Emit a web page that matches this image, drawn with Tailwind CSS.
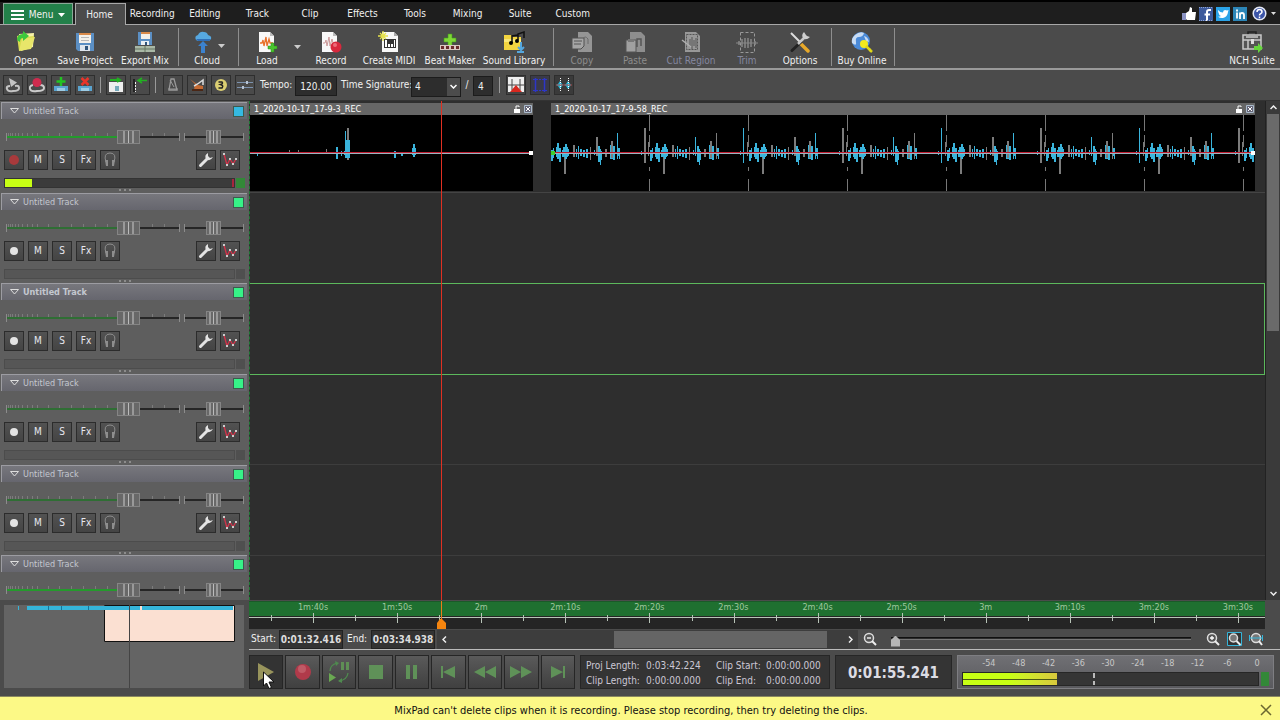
<!DOCTYPE html>
<html lang="en">

<head>
    <meta charset="UTF-8">
    <meta name="viewport" content="width=device-width, initial-scale=1.0">
    <title>MixPad</title>
    <script src="https://cdn.jsdelivr.net/npm/@tailwindcss/browser@4"></script>
</head>

<body class="h-screen flex flex-col overflow-hidden bg-[#4b4b4b] text-[#f0f0f0] text-[10px] leading-[12px] font-['DejaVu_Sans_Condensed','DejaVu_Sans',sans-serif] whitespace-nowrap">

    <!-- tab bar -->
    <header class="h-[25px] shrink-0 flex items-end bg-[#1e1e1e] border-t-2 border-black border-b border-b-[#a8a8a8] pl-[3px]">
        <button class="w-[70px] h-[21px] pt-px bg-[#23804a] border border-[#8aa897] border-b-0 flex items-center justify-center gap-[5px]">
            <svg width="13" height="10" viewBox="0 0 13 10"><path d="M0 1h13M0 5h13M0 9h13" stroke="#fff" stroke-width="2"/></svg>
            Menu
            <svg width="7" height="4" viewBox="0 0 7 4"><path d="M0 0h7L3.500 4z" fill="#fff"/></svg>
        </button>
        <nav class="flex items-end">
            <a href="#" class="ml-[2px] w-[51px] h-[22px] -mb-px pr-[2px] bg-[#4b4b4b] border border-[#a8a8a8] border-b-0 flex items-center justify-center">Home</a>
            <div class="w-[473px] h-[20px] grid grid-cols-9 items-center text-center">
                <a href="#">Recording</a>
                <a href="#">Editing</a>
                <a href="#">Track</a>
                <a href="#">Clip</a>
                <a href="#">Effects</a>
                <a href="#">Tools</a>
                <a href="#">Mixing</a>
                <a href="#">Suite</a>
                <a href="#">Custom</a>
            </div>
        </nav>
        <div class="ml-auto flex items-center gap-[3px] pr-[4px] pb-[3px]">
            <button aria-label="Like"><svg width="14" height="14" viewBox="0 0 14 14"><path d="M0 6h4v7H0z" fill="#8b93c4"/><path d="M4 6l3-2 1-4 2 1v4h4l-1 8H5l-1-1z" fill="#fff"/></svg></button>
            <button aria-label="Facebook"><svg width="14" height="14" viewBox="0 0 14 14"><path d="M0 0h14v14H0z" fill="#3d5a9c"/><path d="M12 3h-2q-2 0-2 2v9M5.500 7.500H11" stroke="#fff" stroke-width="2" fill="none"/><path d="M0 .5h14M0 13.500h14" stroke="#8fa3cf" stroke-dasharray="1 1"/></svg></button>
            <button aria-label="Twitter"><svg width="14" height="14" viewBox="0 0 14 14"><path d="M0 0h14v14H0z" fill="#2aa3e8"/><path d="M2 3q2 2.500 5 2.500Q7 3 9 3l2 .5L12.500 3 12 5q-.5 5-5 6-3 .3-5-1.200 2 0 3-.8-2-.5-2-2Q2 5 2 3z" fill="#fff"/></svg></button>
            <button aria-label="LinkedIn"><svg width="14" height="14" viewBox="0 0 14 14"><path d="M0 0h14v14H0z" fill="#2c86b8"/><path d="M4 5.500v6M4 2.500v2M7 12V5.500M7 8q0-2 2-2t2 2v4" stroke="#fff" stroke-width="1.800" fill="none"/></svg></button>
            <button aria-label="Help" class="ml-[2px]"><svg width="15" height="15" viewBox="0 0 15 15"><circle cx="7.500" cy="7.500" r="6.300" fill="#3c55a8" stroke="#e4e8f4" stroke-width="1.500"/><path d="M5 6q0-2.500 2.500-2.500T10 6q0 1-1.300 1.700T7.500 9.500M7.500 10.500v1.700" stroke="#fff" stroke-width="1.500" fill="none"/></svg></button>
            <button aria-label="Help options" class="ml-px"><svg width="5" height="3" viewBox="0 0 5 3"><path d="M0 0h5L2.500 3z" fill="#ddd"/></svg></button>
        </div>
    </header>

    <!-- ribbon -->
    <section class="h-[45px] shrink-0 flex items-center border-b-2 border-[#9a9a9a]">
        <button class="w-[52px] pt-[5px] flex flex-col items-center gap-[2px]">
            <svg width="22" height="22" viewBox="0 0 22 22"><path d="M4 3l15-1-1 14-12 4z" fill="#f7f2a8"/><path d="M2 5l7-2 1 3 9-1-3 12-12 3z" fill="#d9dc4e"/><path d="M7 8l13-2-4 12-12 2z" fill="#e8e66a"/><path d="M2 9q0-6 6-6V0l6 5-6 5V7Q5 7 5 11z" fill="#3cc83c"/></svg>
            Open</button>
        <button class="w-[66px] pt-[5px] flex flex-col items-center gap-[2px]">
            <svg width="22" height="22" viewBox="0 0 22 22"><path d="M2 2h18v18H4l-2-2z" fill="#5b8fc4"/><path d="M5 2h12v10H5z" fill="#f4f0ea"/><path d="M5 2h12v2H5z" fill="#d98a4a"/><path d="M7 6.500h8M7 9.500h8" stroke="#b8b8b8"/><path d="M6 14h10v6H6z" fill="#dfe6ee"/><path d="M11 15h3v4h-3z" fill="#31567c"/></svg>
            Save Project</button>
        <button class="w-[54px] pt-[5px] flex flex-col items-center gap-[2px]">
            <svg width="22" height="22" viewBox="0 0 22 22"><path d="M4 1h14v13H4z" fill="#5b8fc4"/><path d="M7 1h9v7H7z" fill="#f4f0ea"/><path d="M7 1h9v2H7z" fill="#d98a4a"/><path d="M7 10h8v4H7z" fill="#e8eef4"/><path d="M11 11h2v3h-2z" fill="#31567c"/><path d="M1 15h20v6H1z" fill="#a9b8a6"/><path d="M1 18h20M11 15v6" stroke="#657562"/></svg>
            Export Mix</button>
        <span class="w-px h-[38px] mx-[6px] bg-[#8e8e8e]"></span>
        <button class="w-[44px] pt-[5px] flex flex-col items-center gap-[2px]">
            <span class="flex items-center gap-[6px] pl-[5px]">
                <svg width="18" height="22" viewBox="0 0 18 22"><path d="M2 9Q0 5 4 4q2-4 6-3 3 0 4 3 4 1 3 4l-2 2H4z" fill="#56a8e0"/><path d="M2 8h15l-2 2H4z" fill="#2f6fb8"/><path d="M9 10l5 5h-3v7H7v-7H4z" fill="#3b82cf"/></svg>
                <svg class="mt-[8px]" width="7" height="4" viewBox="0 0 7 4"><path d="M0 0h7L3.500 4z" fill="#ccc"/></svg>
            </span>
            Cloud</button>
        <span class="w-px h-[38px] mx-[9px] bg-[#8e8e8e]"></span>
        <button class="w-[38px] pt-[5px] flex flex-col items-center gap-[2px]">
            <svg width="22" height="22" viewBox="0 0 22 22"><path d="M3 1h11l4 4v16H3z" fill="#f8f8f8"/><path d="M14 1v4h4z" fill="#bbb"/><path d="M4 12h2l1-3 1 6 2-9 1 9 2-7 1 4h3" stroke="#e8702a" stroke-width="1.300" fill="none"/><path d="M15 12h3v3h3v3h-3v3h-3v-3h-3v-3h3z" fill="#4ac52e" stroke="#2d8c1b" stroke-width=".5"/></svg>
            Load</button>
        <button aria-label="Load options" class="w-[21px] pl-[2px] flex justify-center"><svg width="7" height="4" viewBox="0 0 7 4"><path d="M0 0h7L3.500 4z" fill="#ccc"/></svg></button>
        <button class="w-[48px] pt-[5px] flex flex-col items-center gap-[2px]">
            <svg width="22" height="22" viewBox="0 0 22 22"><path d="M2 1h11l4 4v16H2z" fill="#f8f8f8"/><path d="M13 1v4h4z" fill="#bbb"/><path d="M3 12h2l1-3 1 6 2-9 1 9 2-7 1 4h3" stroke="#c99" stroke-width="1" fill="none"/><circle cx="16" cy="16" r="5.500" fill="#d8283c"/><circle cx="15" cy="14" r="2" fill="#ee6b78"/></svg>
            Record</button>
        <button class="w-[68px] pt-[5px] flex flex-col items-center gap-[2px]">
            <svg width="22" height="22" viewBox="0 0 22 22"><path d="M4 1h12l4 4v16H4z" fill="#f8f8f8"/><path d="M16 1v4h4z" fill="#aaa"/><path d="M6 8h12v9H6z" fill="#333"/><path d="M7 9h2v7H7zM10 13h2v3h-2zM13 13h2v3h-2zM16 9h1v7h-1z" fill="#fff"/><path d="M5 0v10M0 5h10M2 2l6 6M8 2l-6 6" stroke="#e6e24c" stroke-width="1.300"/></svg>
            Create MIDI</button>
        <button class="w-[54px] pt-[5px] flex flex-col items-center gap-[2px]">
            <svg width="22" height="22" viewBox="0 0 22 22"><path d="M9 3h4v4h4v4h-4v4H9v-4H5V7h4z" fill="#7fd836" stroke="#3f9a1c" stroke-width=".6"/><path d="M1 14h20v5H1z" fill="#d9c8c0"/><path d="M2 15h3v3H2zM7 15h3v3H7zM12 15h3v3h-3zM17 15h3v3h-3z" fill="#6a2c2c"/></svg>
            Beat Maker</button>
        <button class="w-[74px] pt-[5px] flex flex-col items-center gap-[2px]">
            <svg width="22" height="22" viewBox="0 0 22 22"><path d="M1 4h7l2 2h8v13H1z" fill="#f3d540"/><path d="M1 8h17v3H1z" fill="#fae878"/><path d="M9 12V5l6-1M15 9V3l6-2v6" stroke="#111" stroke-width="1.500" fill="none"/><circle cx="8" cy="12" r="2"/><circle cx="14" cy="10" r="2"/><path d="M18 11v8M15 16l3 3 3-3M14 21h7" stroke="#55a7de" stroke-width="2" fill="none"/></svg>
            Sound Library</button>
        <span class="w-px h-[38px] mx-[2px] bg-[#8e8e8e]"></span>
        <button disabled class="w-[52px] pt-[5px] flex flex-col items-center gap-[2px] text-[#8d8d8d]">
            <svg width="22" height="22" viewBox="0 0 22 22"><path d="M7 1h10l4 4v16H7z" fill="#959595"/><path d="M12 8q2-4 5 0v5" stroke="#6a6a6a" fill="none"/><path d="M1 7h12v8l-3 3H1z" fill="#a5a5a5" stroke="#505050"/><path d="M3 10h8M3 13h7" stroke="#555"/></svg>
            Copy</button>
        <button disabled class="w-[54px] pt-[5px] flex flex-col items-center gap-[2px] text-[#8d8d8d]">
            <svg width="22" height="22" viewBox="0 0 22 22"><path d="M6 1h11l4 4v16H6z" fill="#8e8e8e"/><path d="M13 16V8h4v7" stroke="#555" fill="none" stroke-width="1.500"/><path d="M2 9h10v12H2z" fill="#a0a0a0" stroke="#555"/><path d="M4 8h6v3H4z" fill="#777"/></svg>
            Paste</button>
        <button disabled class="w-[58px] pt-[5px] flex flex-col items-center gap-[2px] text-[#8588a0]">
            <svg width="22" height="22" viewBox="0 0 22 22"><path d="M5 1h11l4 4v16H5z" fill="#989898"/><path d="M6.500 3.500h11v15h-11z" fill="none" stroke="#555" stroke-dasharray="2 1"/><path d="M10 8v8M12 6v12M14 9v6M16 7v10" stroke="#555"/><path d="M2 9l9 7" stroke="#b0b0b0" stroke-width="1.500"/></svg>
            Cut Region</button>
        <button disabled class="w-[54px] pt-[5px] flex flex-col items-center gap-[2px] text-[#8588a0]">
            <svg width="22" height="22" viewBox="0 0 22 22"><path d="M4.500 1.500h14v20h-14z" fill="none" stroke="#999" stroke-dasharray="3 2"/><path d="M0 12h22" stroke="#888"/><path d="M3 10v4M6 8v8M9 7v10M12 7v10M15 8v8M19 10v4" stroke="#888" stroke-width="1.500"/></svg>
            Trim</button>
        <button class="w-[52px] pt-[5px] flex flex-col items-center gap-[2px]">
            <svg width="22" height="22" viewBox="0 0 22 22"><path d="M2 2l9 9" stroke="#ddd" stroke-width="2"/><path d="M11 12l8 8" stroke="#e8a92a" stroke-width="3.500" stroke-linecap="round"/><path d="M3 19.500L12 11" stroke="#222" stroke-width="3" stroke-linecap="round"/><path d="M9 13l7-7" stroke="#c8c8c8" stroke-width="2.500"/><path d="M15 1q-3 3-1 6 3 3 7-1l-3-1-1-1z" fill="#cfcfcf"/></svg>
            Options</button>
        <span class="w-px h-[38px] ml-[5px] mr-[2px] bg-[#8e8e8e]"></span>
        <button class="w-[56px] pt-[5px] flex flex-col items-center gap-[2px]">
            <svg width="22" height="22" viewBox="0 0 22 22"><circle cx="10" cy="10" r="9" fill="#4a8ad8"/><path d="M4 4q5-4 9-2-1 4-5 4t-3 5-4 1q-1-5 3-8zM13 5q4 1 5 6l-3-1z" fill="#c8dcf4"/><circle cx="13" cy="13" r="4" fill="#f2ea1e"/><path d="M15 15l6 6M18 20l2-2" stroke="#e0d818" stroke-width="2.500"/></svg>
            Buy Online</button>
        <span class="w-px h-[38px] ml-[4px] bg-[#8e8e8e]"></span>
        <button class="ml-auto w-[56px] pt-[5px] flex flex-col items-center gap-[2px]">
            <svg width="22" height="22" viewBox="0 0 22 22"><path d="M7 4V1h8v3" stroke="#222" stroke-width="1.500" fill="none"/><path d="M2 4h18v14H2z" fill="#555" stroke="#c9c9c9" stroke-width="1.500"/><path d="M2 9h18M7 9v9M5 6h12" stroke="#c9c9c9" stroke-width="1.500"/><path d="M10 8h3v5h-3z" fill="#ddd"/><path d="M13 15h4v-3l5 5-5 5v-3h-4z" fill="#66d63c"/></svg>
            NCH Suite</button>
    </section>

    <!-- toolbar -->
    <section class="h-[31px] shrink-0 flex items-center pl-[3px] border-b border-[#333]">
        <div class="flex gap-[4px]">
            <button aria-label="Loop playback" class="size-5 border border-[#2e2e2e] bg-[#4a4a4a] grid place-items-center"><svg width="16" height="16" viewBox="0 0 16 16"><path d="M5 9q-4 0-3 3t6 2q6 0 6-3t-4-2" stroke="#c4c4c4" stroke-width="2" fill="none"/><path d="M4 1l8 4.500L6 10z" fill="#c4c4c4"/></svg></button>
            <button aria-label="Loop recording" class="size-5 border border-[#2e2e2e] bg-[#4a4a4a] grid place-items-center"><svg width="16" height="16" viewBox="0 0 16 16"><path d="M4 8q-4 1-3 4t7 2q7 0 7-3t-4-3" stroke="#ccc" stroke-width="2" fill="none"/><circle cx="8" cy="5.500" r="4.500" fill="#cf2b4e"/></svg></button>
            <button aria-label="Add track" class="size-5 border border-[#2e2e2e] bg-[#4a4a4a] grid place-items-center"><svg width="16" height="16" viewBox="0 0 16 16"><path d="M1 9h14v5H1z" fill="#5aa4d0"/><path d="M4 11h8v3H4z" fill="#9ccbe4"/><path d="M8 0v9M3.500 4.500h9" stroke="#22c422" stroke-width="2.500"/></svg></button>
            <button aria-label="Delete track" class="size-5 border border-[#2e2e2e] bg-[#4a4a4a] grid place-items-center"><svg width="16" height="16" viewBox="0 0 16 16"><path d="M1 9h14v5H1z" fill="#5aa4d0"/><path d="M4 11h8v3H4z" fill="#9ccbe4"/><path d="M4.500 1l7 7M11.500 1l-7 7" stroke="#e8342a" stroke-width="2.500"/></svg></button>
        </div>
        <span class="w-px h-4 mx-[5px] bg-[#999]"></span>
        <div class="flex gap-[4px]">
            <button aria-label="Insert mode" class="size-5 border border-[#2e2e2e] bg-[#4a4a4a] grid place-items-center"><svg width="16" height="16" viewBox="0 0 16 16"><path d="M1 5h14v10H1z" fill="#eee"/><path d="M7 9h4v5H7z" fill="#7ab"/><path d="M2 3h9M9 1l3 2-3 2" stroke="#22b022" stroke-width="2" fill="none"/></svg></button>
            <button aria-label="Ripple mode" class="size-5 border border-[#2e2e2e] bg-[#4a4a4a] grid place-items-center"><svg width="16" height="16" viewBox="0 0 16 16"><path d="M1 2h2v13H1z" fill="#222"/><path d="M3.500 5v10" stroke="#eee" stroke-dasharray="2 1"/><path d="M15 3.500H7M10 1L6 3.500 10 6" stroke="#22b022" stroke-width="1.500" fill="none"/></svg></button>
        </div>
        <span class="w-px h-4 ml-[5px] mr-[7px] bg-[#999]"></span>
        <div class="flex gap-[4px]">
            <button aria-label="Metronome" class="size-5 border border-[#2e2e2e] bg-[#4a4a4a] grid place-items-center"><svg width="16" height="16" viewBox="0 0 16 16"><path d="M6 2h3l3 11H4z" fill="none" stroke="#9a9a9a" stroke-width="1.300"/><path d="M3 12h10M9 10L5 3" stroke="#9a9a9a"/></svg></button>
            <button aria-label="Metronome options" class="size-5 border border-[#2e2e2e] bg-[#4a4a4a] grid place-items-center"><svg width="16" height="16" viewBox="0 0 16 16"><path d="M1 2l5 5-1 6h9v-4l-5-1z" fill="#c66a32"/><path d="M5 9q4-2 9-6v5" stroke="#ddd" stroke-width="1.500" fill="none"/><path d="M3 12h11v2H3z" fill="#4a2716"/></svg></button>
            <button aria-label="Count in" class="size-5 border border-[#2e2e2e] bg-[#4a4a4a] grid place-items-center"><svg width="16" height="16" viewBox="0 0 16 16"><circle cx="8" cy="8" r="6" fill="#dccf72"/><path d="M5.500 5H9q1.500 1.500-1.500 2.500Q11 8.500 9 11H5.500" stroke="#222" stroke-width="1.500" fill="none"/></svg></button>
            <button aria-label="Snap" class="size-5 border border-[#2e2e2e] bg-[#4a4a4a] grid place-items-center"><svg width="16" height="16" viewBox="0 0 16 16"><path d="M0 5.500h16M0 10.500h16" stroke="#7c92ae"/><path d="M10 4v3M6 9v3" stroke="#b8c4d4" stroke-width="2"/></svg></button>
        </div>
        <label for="tempo" class="ml-[5px] w-[35px]">Tempo:</label>
        <input id="tempo" type="text" value="120.00" class="w-[42px] h-5 mt-[2px] bg-[#2d2d2d] border border-[#1c1c1c] text-center">
        <label for="beats" class="ml-[4px] w-[70px]">Time Signature:</label>
        <div class="relative mt-[3px]">
            <select id="beats" class="appearance-none w-[50px] h-5 pl-[3px] bg-[#2d2d2d] border border-[#1c1c1c]"><option>4</option></select>
            <span class="absolute right-px top-px w-[13px] h-[18px] bg-[#4c4c4c] grid place-items-center pointer-events-none"><svg width="7" height="5" viewBox="0 0 7 5"><path d="M.5 1l3 3 3-3" stroke="#fff" stroke-width="1.500" fill="none"/></svg></span>
        </div>
        <label for="unit" class="w-[12px] text-center">/</label>
        <input id="unit" type="text" value="4" class="w-[20px] h-5 mt-[2px] bg-[#2d2d2d] border border-[#1c1c1c] pl-[4px]">
        <span class="w-px h-4 mx-[6px] bg-[#999]"></span>
        <div class="flex gap-[4px]">
            <button aria-label="Split" class="size-5 border border-[#2e2e2e] bg-[#444] grid place-items-center"><svg width="16" height="16" viewBox="0 0 16 16"><path d="M0 0h16v15H0z" fill="#eee"/><path d="M4 2v11M12 2v11M0 8h16" stroke="#444"/><path d="M8 8l6 7H2z" fill="#d8281f"/></svg></button>
            <button aria-label="Select region" class="size-5 border border-[#2e2e2e] bg-[#3a3a48] grid place-items-center"><svg width="16" height="16" viewBox="0 0 16 16"><path d="M3.500 1v14M12.500 1v14" stroke="#2d36c8" stroke-width="1.500"/><path d="M1 2.500h14M1 13.500h14" stroke="#2d36c8" stroke-dasharray="2 1"/></svg></button>
            <button aria-label="Waveforms" class="size-5 border border-[#2e2e2e] bg-[#3a3a3a] grid place-items-center"><svg width="16" height="16" viewBox="0 0 16 16"><path d="M0 8l2-1 2-3 3 4-3 4-2-3zM8 8l2-1 2-3 3 4-3 4-2-3z" fill="#25b8d8"/><path d="M4.500 1v14M12.500 1v14" stroke="#fff" stroke-dasharray="1 1"/><path d="M0 8h16" stroke="#a44"/></svg></button>
        </div>
    </section>

    <main class="flex-1 min-h-0 flex flex-col">
        <div class="flex-1 min-h-0 flex">
            <aside id="tracks" class="w-[249px] shrink-0 overflow-hidden bg-[#5e5e5e] pt-px"></aside>

            <!-- arrangement -->
            <section class="relative flex-1 min-w-0 overflow-hidden bg-[#2e2e2e] border-l border-dashed border-[#1c7a32]">
                <div class="h-[92px] flex pt-[2px] border-b border-[#444]">
                    <article class="w-[283px] h-[88px] shrink-0 bg-black">
                        <div class="h-[12px] flex items-center pl-[4px] pr-px bg-[#666] text-white text-[9px]">1_2020-10-17_17-9-3_REC
                            <span class="ml-auto flex gap-[3px]"><svg width="8" height="8" viewBox="0 0 8 8"><path d="M1 4h6v4H1z" fill="#fff"/><path d="M3 4V1h3v1" stroke="#fff" fill="none"/></svg><svg width="8" height="8" viewBox="0 0 8 8"><path d="M.5.5h7v7h-7z" fill="#667" stroke="#abc"/><path d="M2 2l4 4M6 2L2 6" stroke="#fff"/></svg></span>
                        </div>
                        <svg id="wave1" width="283" height="76" viewBox="0 0 283 76"></svg>
                    </article>
                    <article class="ml-[18px] w-[704px] h-[88px] shrink-0 bg-black">
                        <div class="h-[12px] flex items-center pl-[4px] pr-px bg-[#666] text-white text-[9px]">1_2020-10-17_17-9-58_REC
                            <span class="ml-auto flex gap-[3px]"><svg width="8" height="8" viewBox="0 0 8 8"><path d="M1 4h6v4H1z" fill="#fff"/><path d="M3 4V1h3v1" stroke="#fff" fill="none"/></svg><svg width="8" height="8" viewBox="0 0 8 8"><path d="M.5.5h7v7h-7z" fill="#667" stroke="#abc"/><path d="M2 2l4 4M6 2L2 6" stroke="#fff"/></svg></span>
                        </div>
                        <svg id="wave2" width="704" height="76" viewBox="0 0 704 76"></svg>
                    </article>
                </div>
                <div class="h-[90px]"></div>
                <div class="h-[92px] -ml-px border border-[#5cb85c]"></div>
                <div class="h-[90px] border-b border-[#3d3d3d]"></div>
                <div class="h-[91px] border-b border-[#3d3d3d]"></div>
                <div class="absolute left-[191px] top-0 bottom-0 w-px bg-[#e03022]"></div>
            </section>

            <!-- vertical scroll bar -->
            <div class="w-[15px] shrink-0 bg-[#3a3a3a] border-l border-[#222] flex flex-col items-center">
                <button aria-label="Scroll up" class="h-[13px]"><svg width="7" height="5" viewBox="0 0 7 5"><path d="M.5 4l3-3 3 3" stroke="#eee" stroke-width="1.500" fill="none"/></svg></button>
                <div class="w-[12px] h-[217px] bg-[#6a6a6a]"></div>
                <button aria-label="Scroll down" class="mt-auto h-[13px]"><svg width="7" height="5" viewBox="0 0 7 5"><path d="M.5 1l3 3 3-3" stroke="#eee" stroke-width="1.500" fill="none"/></svg></button>
            </div>
        </div>

        <div class="h-[96px] shrink-0 flex">
            <!-- project overview -->
            <div class="w-[249px] shrink-0 pl-[4px] pt-[5px]">
                <svg width="240" height="83" viewBox="0 0 240 83"><path d="M0 0h240v83H0z" fill="#646464"/><path d="M100.500.5h130v36h-130z" fill="#fbe0d2" stroke="#111"/><path d="M14 1h1v4h-1zM23 1h113v4H23zM138 1h91v4h-91z" fill="#35b5da"/><path d="M44.500 1v4M57.500 1v4M84.500 1v4" stroke="#17759a"/><path d="M125.500 0v83" stroke="#444"/></svg>
            </div>

            <div class="flex-1 min-w-0 flex flex-col">
                <!-- time ruler -->
                <div class="relative h-[28px] mr-[15px] mt-px overflow-hidden bg-[#252525]">
                    <div class="h-[15px] bg-[#1f7030] border-t border-[#1a5a28]"></div>
                    <svg id="ruler" class="absolute left-0 top-0" width="1016" height="28" viewBox="0 0 1016 28"></svg>
                    <div class="absolute left-[22px] top-px w-[1009px] grid grid-cols-12 text-center text-[9px] leading-[10px] text-[#9fc79f]">
                        <span>1m:40s</span><span>1m:50s</span><span>2m</span><span>2m:10s</span><span>2m:20s</span><span>2m:30s</span><span>2m:40s</span><span>2m:50s</span><span>3m</span><span>3m:10s</span><span>3m:20s</span><span>3m:30s</span>
                    </div>
                </div>

                <!-- visible range and zoom -->
                <div class="h-[21px] flex items-center border-b border-[#bbb] pl-[2px]">
                    <span class="w-[28px]">Start:</span>
                    <span class="w-[64px] h-[19px] pt-px grid place-items-center bg-[#333] border border-[#222] font-bold text-[#ddd]">0:01:32.416</span>
                    <span class="ml-[4px] w-[24px]">End:</span>
                    <span class="w-[64px] h-[19px] pt-px grid place-items-center bg-[#333] border border-[#222] font-bold text-[#ddd]">0:03:34.938</span>
                    <div class="ml-[2px] w-[421px] h-[19px] flex items-center bg-[#3d3d3d] px-[5px]">
                        <button aria-label="Scroll left"><svg width="5" height="7" viewBox="0 0 5 7"><path d="M4 .5l-3 3 3 3" stroke="#eee" stroke-width="1.500" fill="none"/></svg></button>
                        <div class="ml-[167px] w-[213px] h-[17px] bg-[#656565]"></div>
                        <button aria-label="Scroll right" class="ml-auto"><svg width="5" height="7" viewBox="0 0 5 7"><path d="M1 .5l3 3-3 3" stroke="#eee" stroke-width="1.500" fill="none"/></svg></button>
                    </div>
                    <button aria-label="Zoom out" class="ml-[5px]"><svg width="14" height="14" viewBox="0 0 14 14"><circle cx="6" cy="6" r="4.500" fill="#555" stroke="#ddd" stroke-width="1.500"/><path d="M9 9l4 4" stroke="#eee" stroke-width="2"/><path d="M4 6h4" stroke="#fff" stroke-width="1.300"/></svg></button>
                    <div class="relative flex-1 ml-[14px] mr-[15px] h-[14px]">
                        <span class="absolute inset-x-0 top-[5px] h-[3px] border-y border-t-[#111] border-b-[#777] bg-[#2b2b2b]"></span>
                        <input aria-label="Zoom" type="range" min="0" max="100" value="0" class="appearance-none absolute inset-0 w-full h-[14px] bg-transparent [&::-webkit-slider-thumb]:appearance-none [&::-webkit-slider-thumb]:w-[9px] [&::-webkit-slider-thumb]:h-[11px] [&::-webkit-slider-thumb]:mt-[4px] [&::-webkit-slider-thumb]:bg-[#b5b5b5] [&::-webkit-slider-thumb]:[clip-path:polygon(50%_0,100%_40%,100%_100%,0_100%,0_40%)]">
                    </div>
                    <div class="flex gap-[7px] pr-[17px]">
                        <button aria-label="Zoom in"><svg width="14" height="14" viewBox="0 0 14 14"><circle cx="6" cy="6" r="4.500" fill="#555" stroke="#ddd" stroke-width="1.500"/><path d="M9 9l4 4" stroke="#eee" stroke-width="2"/><path d="M4 6h4M6 4v4" stroke="#fff" stroke-width="1.300"/></svg></button>
                        <button aria-label="Zoom selection"><svg width="15" height="14" viewBox="0 0 15 14"><path d="M.5.5h14v13H.5z" fill="#333" stroke="#35b5da"/><circle cx="6.500" cy="6" r="4" fill="#777" stroke="#ddd" stroke-width="1.500"/><path d="M9.500 9l4 4" stroke="#eee" stroke-width="2"/></svg></button>
                        <button aria-label="Zoom to fit"><svg width="14" height="14" viewBox="0 0 14 14"><circle cx="7" cy="6" r="4.500" fill="#777" stroke="#ddd" stroke-width="1.500"/><path d="M10 9l3 4" stroke="#eee" stroke-width="2"/><path d="M0 6h14M.5 3v6M13.500 3v6" stroke="#35b5da"/></svg></button>
                    </div>
                </div>

                <!-- transport -->
                <div class="flex-1 flex items-center pb-[2px] gap-[5px] pr-[6px]">
                    <div class="w-[326px] grid grid-cols-9 gap-[2px]">
                        <button aria-label="Play" class="relative h-[34px] border border-[#262626] bg-[#333] grid place-items-center"><svg width="24" height="24" viewBox="0 0 24 24"><path d="M4 3l16 9-16 9z" fill="#98945c"/></svg>
                            <svg class="absolute left-[13px] top-[15px]" width="12" height="18" viewBox="0 0 12 18"><path d="M.5 1v14l3-3 2.500 5.500 2.500-1L6 11h5z" fill="#fff" stroke="#111"/></svg></button>
                        <button aria-label="Record" class="h-[34px] border border-[#262626] bg-linear-to-b from-[#5a5a5a] to-[#404040] grid place-items-center"><svg width="24" height="24" viewBox="0 0 24 24"><circle cx="12" cy="12" r="8" fill="#b03a4a"/><circle cx="11" cy="9" r="4" fill="#bf5a66"/></svg></button>
                        <button aria-label="Loop" class="h-[34px] border border-[#262626] bg-linear-to-b from-[#5a5a5a] to-[#404040] grid place-items-center"><svg width="24" height="24" viewBox="0 0 24 24"><path d="M3 11q0-6 7-8M21 13q-1 7-9 8" stroke="#4f8a4f" stroke-width="1.300" fill="none"/><path d="M2 13l7 4.500L2 22z" fill="#6aa852"/><path d="M14 2h3v8h-3zM19 2h3v8h-3z" fill="#5f8f55"/><path d="M8 1l4 2-3 3zM15 18l-4 3 4 2z" fill="#4f8a4f"/></svg></button>
                        <button aria-label="Stop" class="h-[34px] border border-[#262626] bg-linear-to-b from-[#5a5a5a] to-[#404040] grid place-items-center"><svg width="24" height="24" viewBox="0 0 24 24"><path d="M5 5h14v14H5z" fill="#5f9158"/></svg></button>
                        <button aria-label="Pause" class="h-[34px] border border-[#262626] bg-linear-to-b from-[#5a5a5a] to-[#404040] grid place-items-center"><svg width="24" height="24" viewBox="0 0 24 24"><path d="M6 5h4v14H6zM13 5h4v14h-4z" fill="#5f9158"/></svg></button>
                        <button aria-label="Go to start" class="h-[34px] border border-[#262626] bg-linear-to-b from-[#5a5a5a] to-[#404040] grid place-items-center"><svg width="24" height="24" viewBox="0 0 24 24"><path d="M5 6h2v12H5zM19 6v12L7 12z" fill="#5f9158"/></svg></button>
                        <button aria-label="Rewind" class="h-[34px] border border-[#262626] bg-linear-to-b from-[#5a5a5a] to-[#404040] grid place-items-center"><svg width="24" height="24" viewBox="0 0 24 24"><path d="M12 6v12L1 12zM23 6v12l-11-6z" fill="#5f9158"/></svg></button>
                        <button aria-label="Fast forward" class="h-[34px] border border-[#262626] bg-linear-to-b from-[#5a5a5a] to-[#404040] grid place-items-center"><svg width="24" height="24" viewBox="0 0 24 24"><path d="M1 6v12l11-6zM12 6v12l11-6z" fill="#5f9158"/></svg></button>
                        <button aria-label="Go to end" class="h-[34px] border border-[#262626] bg-linear-to-b from-[#5a5a5a] to-[#404040] grid place-items-center"><svg width="24" height="24" viewBox="0 0 24 24"><path d="M17 6h2v12h-2zM5 6v12l12-6z" fill="#5f9158"/></svg></button>
                    </div>
                    <dl class="w-[250px] h-[34px] pt-px grid grid-cols-[60px_70px_50px_60px] content-center pl-[5px] bg-[#343434] border border-[#262626] leading-[15px] text-[#ccc8d4]">
                        <dt>Proj Length:</dt><dd>0:03:42.224</dd><dt>Clip Start:</dt><dd>0:00:00.000</dd>
                        <dt>Clip Length:</dt><dd>0:00:00.000</dd><dt>Clip End:</dt><dd>0:00:00.000</dd>
                    </dl>
                    <div class="w-[117px] h-[34px] pt-px grid place-items-center bg-[#343434] border border-[#262626] font-bold text-[15px] text-[#dcdce4]">0:01:55.241</div>
                    <div class="flex-1 h-[34px] px-[4px] bg-linear-to-b from-[#707074] to-[#5a5a5e] border border-[#7e7e82] text-[#c8c8c8] text-[9px] leading-[14px]">
                        <div class="grid grid-cols-10 pl-[12px] text-center mr-[-3px]">
                            <span>-54</span><span>-48</span><span>-42</span><span>-36</span><span>-30</span><span>-24</span><span>-18</span><span>-12</span><span>-6</span><span>0</span>
                        </div>
                        <div class="flex gap-[2px] mt-[2px]">
                            <div class="flex-1 h-[14px] relative bg-[#353535] border border-[#262626]">
                                <div class="h-full bg-linear-to-r from-[#c8ff14] from-50% to-[#d8c83c]" style="width:32%"></div>
                                <div class="absolute left-0 top-[6px] h-px bg-[#4b5a14]" style="width:32%"></div>
                                <div class="absolute top-0 bottom-0 w-[2px] bg-[linear-gradient(#bbb_5px,transparent_5px,transparent_8px,#bbb_8px)]" style="left:44%"></div>
                            </div>
                            <div class="w-[8px] h-[14px] bg-[#338838]"></div>
                        </div>
                    </div>
                </div>
            </div>
        </div>
    </main>

    <!-- notification -->
    <footer class="h-[24px] shrink-0 flex items-center bg-[#fcf986] border-t border-[#8a8860] text-[#111] px-[14px]">
        <p class="flex-1 pt-[4px] pr-[12px] text-center text-[11px] leading-[14px]">MixPad can't delete clips when it is recording. Please stop recording, then try deleting the clips.</p>
        <button aria-label="Close" class="-mr-[6px] pt-[3px]"><svg width="12" height="12" viewBox="0 0 12 12"><path d="M1 1l10 10M11 1L1 11" stroke="#6b6830" stroke-width="1.500"/></svg></button>
    </footer>

    <script>
        const tracks = [
            { recording: true, height: 91 },
            { height: 90 },
            { selected: true, height: 91 },
            { height: 91 },
            { height: 90 },
            { collapsed: true, height: 91 }
        ]

        const btn = 'size-5 border border-[#2c2c2c] bg-linear-to-b from-[#525252] to-[#444] grid place-items-center text-[10px] text-[#e8e8f0]'
        const thumb = '[&::-webkit-slider-thumb]:appearance-none [&::-webkit-slider-thumb]:h-[14px] [&::-webkit-slider-thumb]:border [&::-webkit-slider-thumb]:border-[#858585]'

        // log spaced ticks above the volume slider
        let ticks = ''
        for (const x of [8, 10, 12, 15, 18, 22, 27, 32, 37, 48, 59, 71, 83, 95, 107, 152, 164]) {
            ticks += `M${x}.5 3v3`
        }

        const controls = t => `
            <div class="h-5 mt-[6px] flex gap-[4px] pl-[4px] pr-[9px]">
                <button aria-label="Arm" class="${btn}"><svg width="14" height="14" viewBox="0 0 14 14"><circle cx="7" cy="7" r="${t.recording ? 5 : 4}" fill="${t.recording ? '#a83a3c' : '#e4e4e4'}"/></svg></button>
                <button class="${btn}">M</button>
                <button class="${btn}">S</button>
                <button class="${btn}">Fx</button>
                <button aria-label="Monitor" class="${btn}"><svg width="14" height="16" viewBox="0 0 14 16"><path d="M3 10Q0 1 7 1t4 9" stroke="#8e8e8e" fill="none"/><path d="M2 8h3v6H3zM12 8H9v6h2z" fill="#8e8e8e"/></svg></button>
                <button aria-label="Track settings" class="${btn} ml-auto"><svg width="16" height="16" viewBox="0 0 16 16"><path d="M2.500 13.500l7-7" stroke="#e4e4e4" stroke-width="3" stroke-linecap="round"/><path d="M10 1q-4 2-2 6 4 3 7-2l-3 1-2-2z" fill="#e4e4e4"/></svg></button>
                <button aria-label="Automation" class="${btn}"><svg width="16" height="16" viewBox="0 0 16 16"><path d="M2 2l3 11 3-6 3 5 3-5" stroke="#d6324a" stroke-width="1.300" fill="none"/><path d="M1 1h2v2H1zM4 12h2v2H4zM7 6h2v2H7zM10 11h2v2h-2zM13 6h2v2h-2z" fill="#ccc"/></svg></button>
            </div>
            <div class="mt-[8px] ml-[4px] mr-[4px] flex gap-px">
                <div class="flex-1 h-[10px] flex justify-between border ${t.recording ? 'border-[#333] bg-[#3b3b3b]' : 'border-[#4c4c4c] bg-[#565656]'}">
                    ${t.recording ? '<span class="w-[27px] bg-[#c8ff14]"></span><span class="w-[2px] bg-[#a8243c]"></span>' : ''}
                </div>
                <div class="w-[9px] h-[10px] ${t.recording ? 'bg-[#338838]' : 'bg-[#4f4f4f]'}"></div>
            </div>
            <div class="h-[3px] flex justify-center items-center gap-[3px]">
                <span class="size-[2px] bg-[#8c8c8c]"></span><span class="size-[2px] bg-[#8c8c8c]"></span><span class="size-[2px] bg-[#8c8c8c]"></span>
            </div>`

        document.getElementById('tracks').innerHTML = tracks.map(t => `
            <div style="height:${t.height}px">
                <div class="h-[17px] ml-px mr-[2px] flex items-center pl-[8px] pr-[3px] bg-linear-to-b from-[#77777d] to-[#66666e] border-t border-l border-[#9c9ca2] text-[9px] ${t.selected ? 'font-bold' : ''} text-[#c4c8d0]">
                    <svg width="9" height="6" viewBox="0 0 9 6"><path d="M.5.5h8l-4 4.500z" fill="none" stroke="#ddd"/></svg>
                    <span class="ml-[4px]">Untitled Track</span>
                    <span class="ml-auto size-[11px] border border-[#3d5a4d] ${t.recording ? 'bg-[#35b9e2]' : 'bg-[#36f288]'}"></span>
                </div>
                <div class="relative h-[14px] mt-[11px] flex items-center pl-[6px] gap-[5px]">
                    <svg class="absolute left-0 top-0" width="248" height="14" viewBox="0 0 248 14"><path d="${ticks}" stroke="#7c7c7c"/><path d="M6.500 3v8M179.500 3v8M184.500 3v8M243.500 3v8" stroke="#8c8c8c"/><path d="M7 7h110" stroke="${t.recording || t.collapsed ? '#249a2c' : '#2f6e34'}" stroke-width="2"/><path d="M140 7h39M185 7h58" stroke="#262626" stroke-width="2"/></svg>
                    <input aria-label="Volume" type="range" value="74" class="appearance-none relative w-[173px] h-[14px] bg-transparent ${thumb} [&::-webkit-slider-thumb]:w-[23px] [&::-webkit-slider-thumb]:bg-[linear-gradient(90deg,#686868_5px,#999_5px,#999_7px,#686868_7px,#686868_10px,#bbb_10px,#bbb_11px,#686868_11px,#686868_14px,#999_14px,#999_16px,#686868_16px)]">
                    <input aria-label="Pan" type="range" value="50" class="appearance-none relative w-[59px] h-[14px] bg-transparent ${thumb} [&::-webkit-slider-thumb]:w-[15px] [&::-webkit-slider-thumb]:bg-[linear-gradient(90deg,#686868_2px,#999_2px,#999_4px,#686868_4px,#686868_6px,#bbb_6px,#bbb_7px,#686868_7px,#686868_9px,#999_9px,#999_11px,#686868_11px)]">
                </div>
                ${t.collapsed ? '' : controls(t)}
            </div>`).join('')

        // each bar is x, width, height above and below the middle line, grey or not
        const mid = 38
        function bars(list, dx) {
            return list.map(([x, w, up, down, grey]) =>
                `<path d="M${x + dx} ${mid - up}h${w}v${up + down}h-${w}z" fill="${grey ? '#7c7c7c' : '#3ab4dc'}"/>`).join('')
        }
        function axis(w) {
            return `<path d="M0 37.500h${w}" stroke="#c01c30"/><path d="M0 38.500h${w}" stroke="#9cb4c0"/><path d="M${w - 4} 36h4v4h-4z" fill="#fff"/>`
        }

        const first = [[3, 1, 1, 1], [7, 1, 1, 3], [39, 1, 3, 1, 1], [48, 1, 3, 1, 1], [52, 2, 1, 1, 1], [76, 1, 4, 1, 1],
            [86, 2, 6, 6], [91, 1, 2, 3], [94, 1, 2, 2], [95, 1, 22, 5], [97, 2, 25, 7, 1], [96, 4, 13, 5],
            [144, 2, 2, 5], [151, 2, 1, 3], [163, 2, 9, 4], [162, 4, 5, 2]]
        document.getElementById('wave1').innerHTML = bars(first, 0) + axis(283)

        const beat = [[0, 2, 3, 8], [2, 1, 5, 5], [5, 1, 6, 4], [6, 2, 10, 6], [8, 2, 5, 9], [11, 1, 3, 4], [13, 2, 6, 21, 1], [12, 5, 6, 4],
            [14, 2, 9, 6], [17, 1, 4, 3], [22, 2, 8, 4, 1], [25, 1, 4, 4], [27, 1, 7, 6], [29, 2, 4, 3], [32, 2, 3, 4], [35, 2, 4, 5], [39, 1, 6, 7, 1],
            [43, 1, 3, 2], [45, 2, 16, 3, 1], [47, 2, 7, 9], [49, 1, 4, 12], [50, 1, 2, 7], [54, 2, 4, 4, 1], [59, 3, 8, 6], [60, 2, 12, 5, 1],
            [62, 2, 7, 7], [66, 1, 20, 6], [67, 2, 5, 3], [68, 1, 3, 6], [90, 1, 2, 2], [93, 2, 25, 10, 1], [97, 1, 11, 3, 1]]
        let wave = ''
        for (let i = 0; i < 8; i++) {
            const dx = i * 99
            wave += `<path d="M${dx + 98.5} 0v16m0 4v12m0 20v4m0 8v12" stroke="#777"/>`
            wave += bars(beat.map(b => i % 2 && b[2] > 15 ? [b[0], 1, b[2], b[3], !b[4]] : b), dx)
        }
        document.getElementById('wave2').innerHTML = wave + axis(704) + `<path d="M0 36h4v4H0z" fill="#3ccf2c"/>`

        let marks = ''
        for (let i = 0; i < 24; i++) {
            const x = Math.round(22 + i * 42.05)
            marks += i % 2 ? `M${x}.5 12v10` : `M${x}.5 14v6`
        }
        document.getElementById('ruler').innerHTML = `<path d="M0 16.500h1016${marks}" stroke="#b8c4b8" fill="none"/>
            <path d="M192.500 0v20" stroke="#ee7a1a"/><path d="M188 28v-6l3-4h2l4 4v6z" fill="#f5850f"/>`
    </script>
</body>

</html>
